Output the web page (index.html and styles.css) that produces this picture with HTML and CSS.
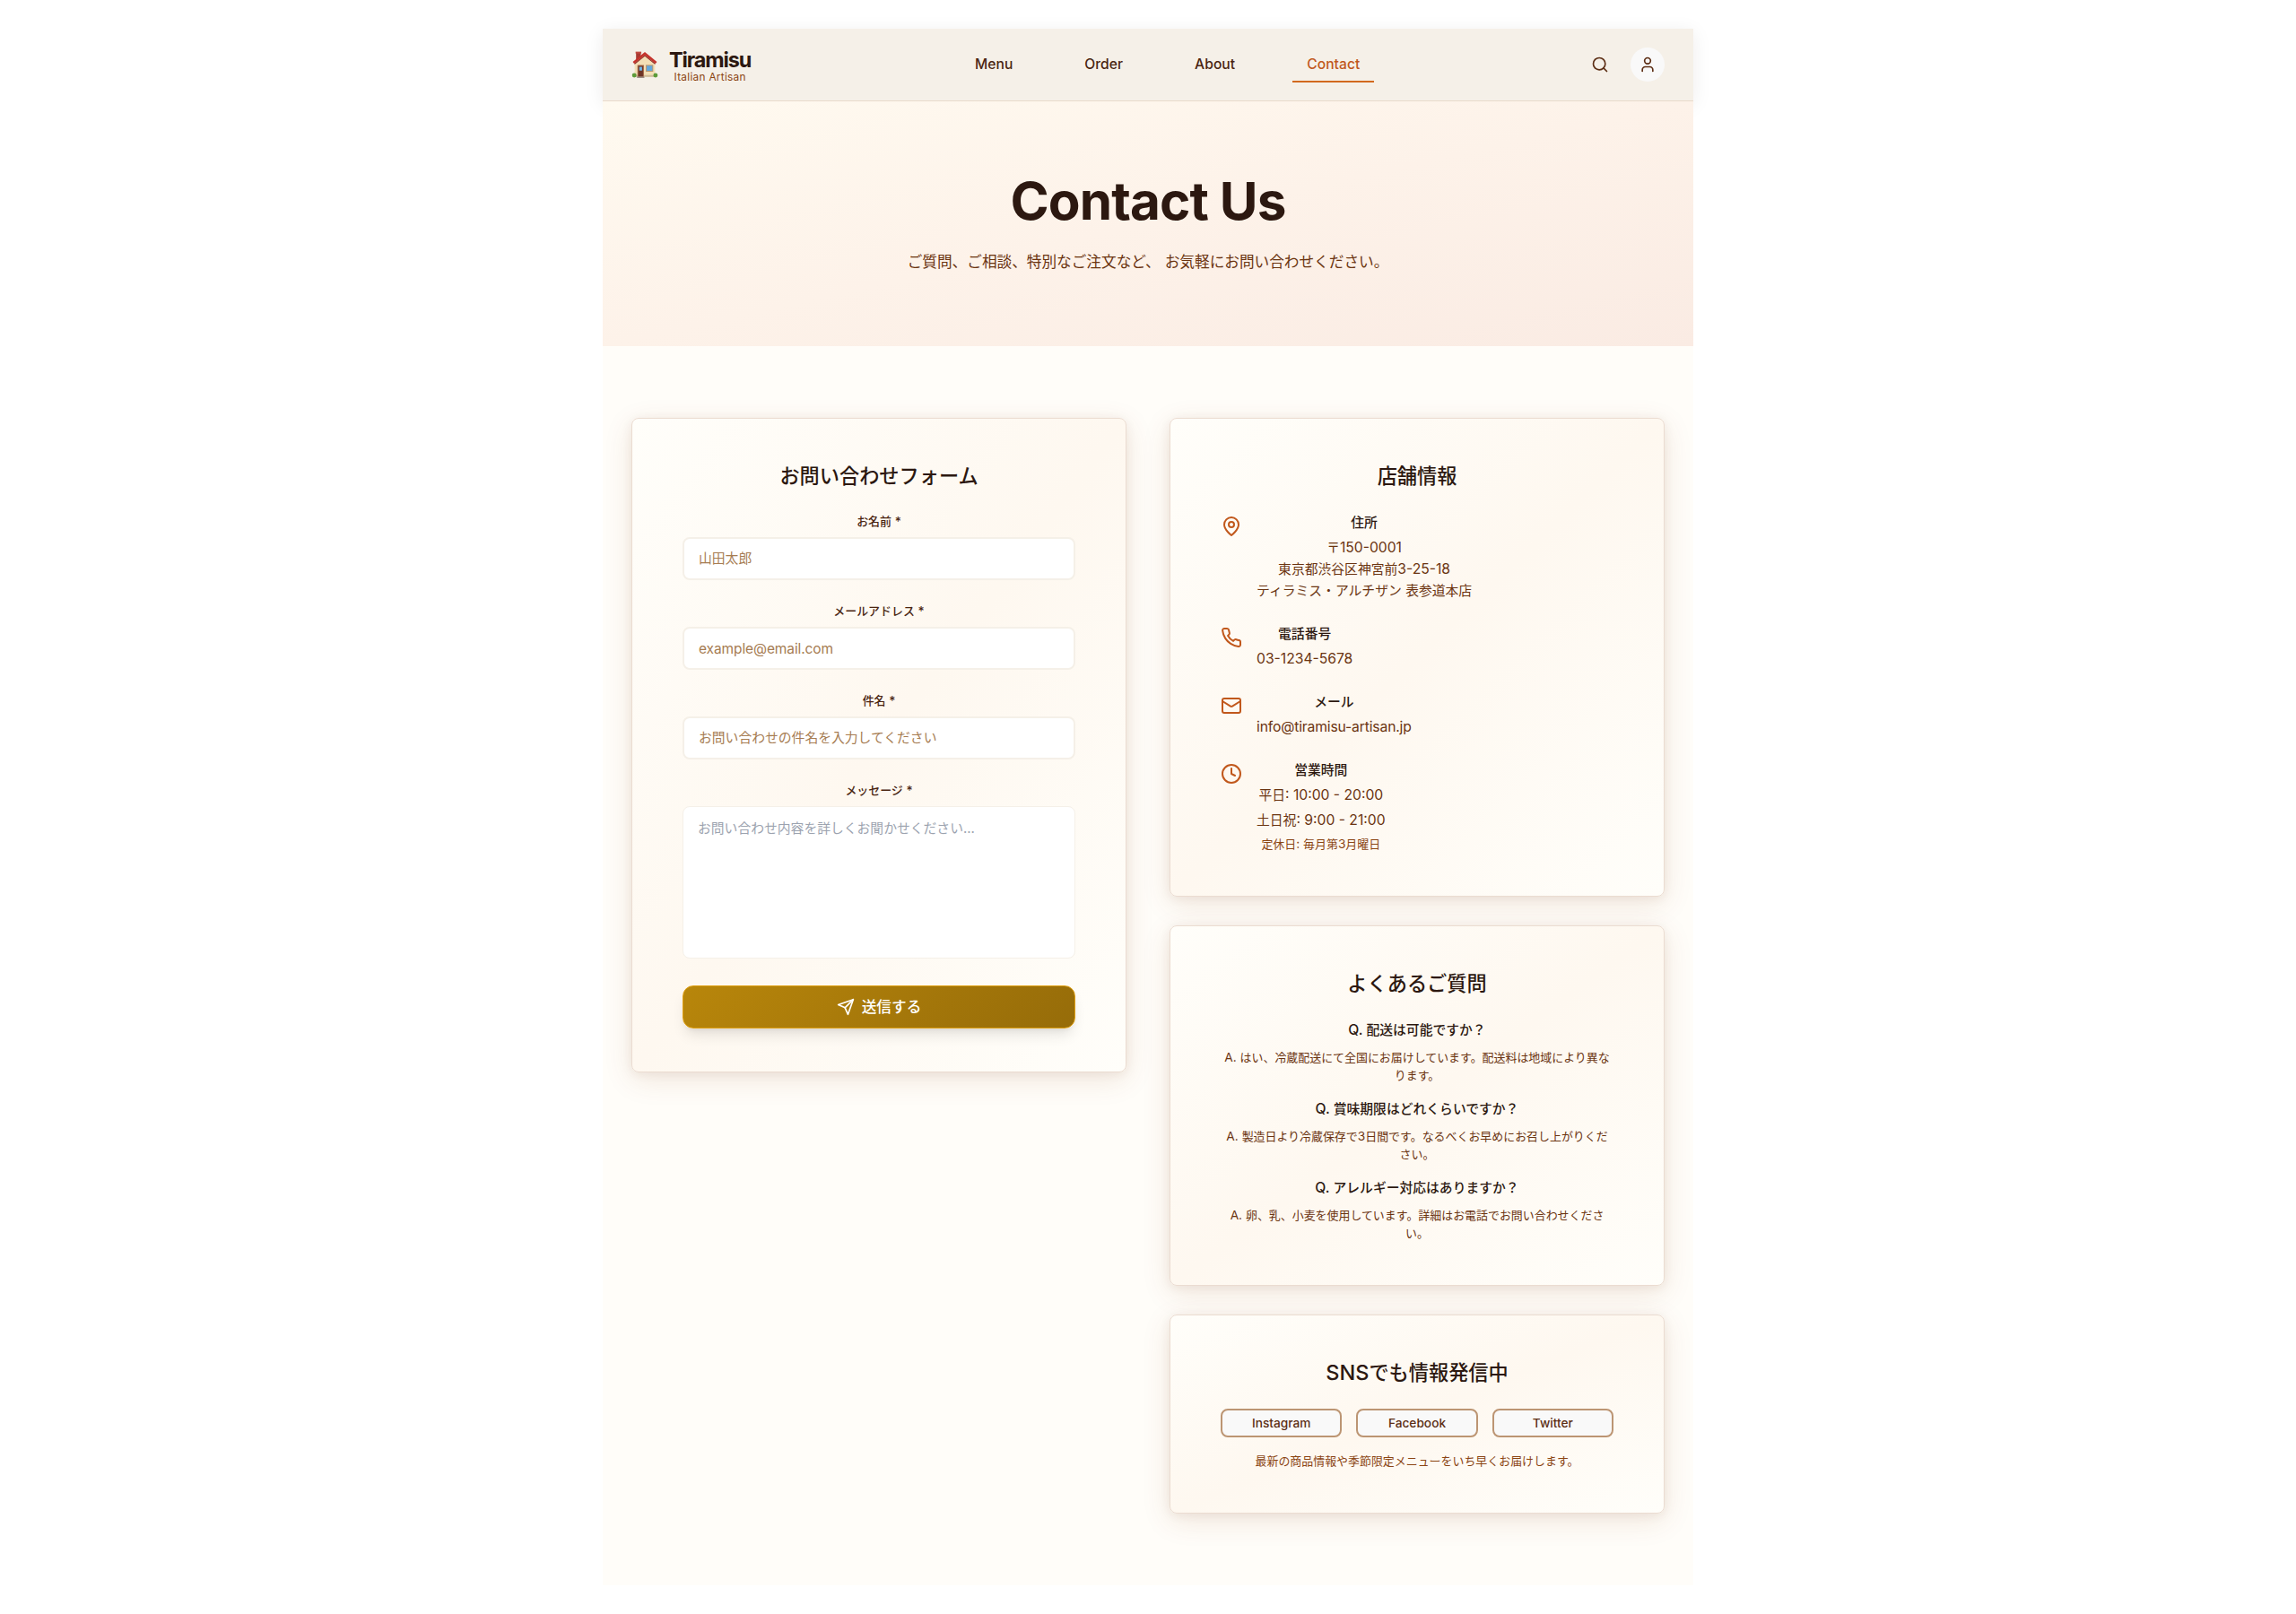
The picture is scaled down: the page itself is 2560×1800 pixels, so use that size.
FILE: index.html
```html
<!DOCTYPE html>
<html lang="ja">
<head>
<meta charset="utf-8">
<title>Contact Us | Tiramisu</title>
<link rel="stylesheet" href="styles.css">
</head>
<body>
<div class="page">
  <header class="header">
    <div class="brand">
      <svg class="brand-icon" viewBox="0 0 28 29" aria-hidden="true">
        <path d="M4.500 1h5.200v8H4.500z" fill="#a93a32"/>
        <path d="M4 .6h6.200v2H4z" fill="#c14a40"/>
        <path d="M3 12.500 14 3l11 9.500V27.500H3z" fill="#f3dfb6"/>
        <path d="M3 25.800h22v2H3z" fill="#cdbb9b"/>
        <path d="M14 1 27 11.600l-1.500 1.900L14 4.300 2.500 13.500 1 11.600z" fill="#c5332c"/>
        <path d="M14 4.300 25.500 13.500l-.7.7L14 5.600 3.200 14.200l-.7-.7z" fill="#8d2420"/>
        <path d="M6 15h7v13H6z" fill="#a56a48"/>
        <path d="M7 16h5v11.500H7z" fill="#6d3527"/>
        <path d="M8 17h3v4H8z" fill="#6fb7e8"/>
        <path d="M15 14.800h8v7.400h-8z" fill="#b99873"/>
        <path d="M16 15.800h6v5.400h-6z" fill="#62a9de"/>
        <circle cx="2.600" cy="26" r="2.400" fill="#5d9b3a"/>
        <circle cx="25.500" cy="26" r="2.400" fill="#5d9b3a"/>
        <path d="M5.500 27.500h8v1.500h-8z" fill="#9b9087"/>
      </svg>
      <div class="brand-text">
        <span class="brand-name">Tiramisu</span>
        <span class="brand-sub">Italian Artisan</span>
      </div>
    </div>
    <nav class="nav">
      <a class="nav-link">Menu</a>
      <a class="nav-link">Order</a>
      <a class="nav-link">About</a>
      <a class="nav-link nav-link-active">Contact</a>
    </nav>
    <div class="actions">
      <button class="icon-button" aria-label="Search"><svg class="icon icon-sm" viewBox="0 0 24 24"><circle cx="11" cy="11" r="8"/><path d="m21 21-4.300-4.300"/></svg></button>
      <button class="icon-button icon-button-filled" aria-label="Account"><svg class="icon icon-sm" viewBox="0 0 24 24"><path d="M19 21v-2a4 4 0 0 0-4-4H9a4 4 0 0 0-4 4v2"/><circle cx="12" cy="7" r="4"/></svg></button>
    </div>
  </header>

  <section class="hero">
    <h1 class="hero-title">Contact Us</h1>
    <p class="hero-text">ご質問、ご相談、特別なご注文など、<span class="lt"> </span>お気軽にお問い合わせください。</p>
  </section>

  <main class="content">
    <section class="card">
      <h2 class="card-title">お問い合わせフォーム</h2>
      <form class="form">
        <div class="field"><label class="label">お名前<span class="lt"> *</span></label><input class="input" placeholder="山田太郎"></div>
        <div class="field"><label class="label">メールアドレス<span class="lt"> *</span></label><input class="input input-latin" placeholder="example@email.com"></div>
        <div class="field"><label class="label">件名<span class="lt"> *</span></label><input class="input" placeholder="お問い合わせの件名を入力してください"></div>
        <div class="field"><label class="label">メッセージ<span class="lt"> *</span></label><textarea class="textarea" placeholder="お問い合わせ内容を詳しくお聞かせください..."></textarea></div>
        <button type="button" class="submit"><svg class="icon icon-sm" viewBox="0 0 24 24"><path d="m22 2-7 20-4-9-9-4Z"/><path d="M22 2 11 13"/></svg><span>送信する</span></button>
      </form>
    </section>

    <div class="column">
      <section class="card">
        <h2 class="card-title">店舗情報</h2>
        <div class="info-list">
          <div class="info">
            <svg class="icon info-icon" viewBox="0 0 24 24"><path d="M20 10c0 6-8 12-8 12s-8-6-8-12a8 8 0 0 1 16 0Z"/><circle cx="12" cy="10" r="3"/></svg>
            <div class="info-body">
              <h3 class="info-title">住所</h3>
              <p class="info-text">〒<span class="lt">150-0001</span><br>東京都渋谷区神宮前<span class="lt">3-25-18</span><br>ティラミス・アルチザン<span class="lt"> </span>表参道本店</p>
            </div>
          </div>
          <div class="info">
            <svg class="icon info-icon" viewBox="0 0 24 24"><path d="M22 16.920v3a2 2 0 0 1-2.180 2 19.790 19.790 0 0 1-8.630-3.070 19.500 19.500 0 0 1-6-6 19.790 19.790 0 0 1-3.070-8.670A2 2 0 0 1 4.110 2h3a2 2 0 0 1 2 1.720 12.840 12.840 0 0 0 .7 2.810 2 2 0 0 1-.45 2.110L8.090 9.910a16 16 0 0 0 6 6l1.270-1.270a2 2 0 0 1 2.110-.45 12.840 12.840 0 0 0 2.810.7A2 2 0 0 1 22 16.920z"/></svg>
            <div class="info-body">
              <h3 class="info-title">電話番号</h3>
              <p class="info-text"><span class="lt">03-1234-5678</span></p>
            </div>
          </div>
          <div class="info">
            <svg class="icon info-icon" viewBox="0 0 24 24"><rect width="20" height="16" x="2" y="4" rx="2"/><path d="m22 7-8.970 5.700a1.940 1.940 0 0 1-2.060 0L2 7"/></svg>
            <div class="info-body">
              <h3 class="info-title">メール</h3>
              <p class="info-text"><span class="lt lt-tight">info@tiramisu-artisan.jp</span></p>
            </div>
          </div>
          <div class="info">
            <svg class="icon info-icon" viewBox="0 0 24 24"><circle cx="12" cy="12" r="10"/><path d="M12 6v6l4 2"/></svg>
            <div class="info-body">
              <h3 class="info-title">営業時間</h3>
              <p class="info-text">平日<span class="lt">: 10:00 - 20:00</span></p>
              <p class="info-text">土日祝<span class="lt">: 9:00 - 21:00</span></p>
              <p class="info-note">定休日<span class="lt">: </span>毎月第<span class="lt">3</span>月曜日</p>
            </div>
          </div>
        </div>
      </section>

      <section class="card">
        <h2 class="card-title">よくあるご質問</h2>
        <div class="faq-list">
          <div class="faq">
            <h3 class="faq-question"><span class="lt">Q. </span>配送は可能ですか？</h3>
            <p class="faq-answer"><span class="lt">A. </span>はい、冷蔵配送にて全国にお届けしています。配送料は地域により異なります。</p>
          </div>
          <div class="faq">
            <h3 class="faq-question"><span class="lt">Q. </span>賞味期限はどれくらいですか？</h3>
            <p class="faq-answer"><span class="lt">A. </span>製造日より冷蔵保存で<span class="lt">3</span>日間です。なるべくお早めにお召し上がりください。</p>
          </div>
          <div class="faq">
            <h3 class="faq-question"><span class="lt">Q. </span>アレルギー対応はありますか？</h3>
            <p class="faq-answer"><span class="lt">A. </span>卵、乳、小麦を使用しています。詳細はお電話でお問い合わせください。</p>
          </div>
        </div>
      </section>

      <section class="card">
        <h2 class="card-title"><span class="lt">SNS</span>でも情報発信中</h2>
        <div class="social">
          <button class="social-button">Instagram</button>
          <button class="social-button">Facebook</button>
          <button class="social-button">Twitter</button>
        </div>
        <p class="social-note">最新の商品情報や季節限定メニューをいち早くお届けします。</p>
      </section>
    </div>
  </main>
</div>
</body>
</html>
```
FILE: styles.css
```css
* {
  box-sizing: border-box;
}

body {
  margin: 0;
  background: #fff;
  color: #2c1810;
  font-family: Inter, "Noto Sans CJK JP", sans-serif;
  font-size: 16px;
  line-height: 24px;
}

h1, h2, h3, p {
  margin: 0;
}

button, input, textarea {
  font: inherit;
}

/* Latin runs sit slightly larger than the Japanese text around them */
.lt {
  font-size: 1.06em;
  line-height: 1;
  white-space: pre-wrap;
}

.lt-tight {
  letter-spacing: -0.15px;
}

.page {
  width: 1216px;
  min-height: 1736px;
  margin: 32px auto;
  background: #fffdf9;
  text-align: center;
}

.header {
  display: flex;
  align-items: center;
  justify-content: space-between;
  height: 81px;
  padding: 0 32px;
  border-bottom: 1px solid #e8dacb;
  background: #f5f0e8;
  box-shadow: 0 4px 20px rgba(44, 24, 16, 0.08);
}

.brand {
  display: flex;
  align-items: center;
  gap: 12px;
}

.brand-icon {
  width: 30px;
  height: 30px;
}

.brand-text {
  display: flex;
  flex-direction: column;
  padding-top: 3px;
}

.brand-name {
  font-size: 23.4px;
  font-weight: 700;
  line-height: 24px;
  letter-spacing: -1.1px;
}

.brand-sub {
  color: #8b4513;
  font-size: 11.8px;
  line-height: 14px;
  letter-spacing: 0.3px;
}

.nav {
  display: flex;
  gap: 48px;
}

.nav-link {
  padding: 8px 16px 6px;
  border-bottom: 2px solid transparent;
  color: #4a2511;
  font-size: 15.6px;
  font-weight: 500;
  letter-spacing: 0.05px;
}

.nav-link-active {
  border-bottom-color: #d2691e;
  color: #c1581c;
}

.actions {
  display: flex;
  align-items: center;
  gap: 16px;
}

.icon-button {
  display: flex;
  padding: 8px;
  border: 0;
  border-radius: 50%;
  background: none;
  color: #5c2e14;
}

.icon-button-filled {
  padding: 9px;
  background: #f9f9f9;
}

.icon {
  flex: none;
  width: 24px;
  height: 24px;
  fill: none;
  stroke: currentColor;
  stroke-width: 2;
  stroke-linecap: round;
  stroke-linejoin: round;
}

.icon-sm {
  width: 20px;
  height: 20px;
}

.hero {
  padding: 80px 32px;
  background: linear-gradient(to bottom right, #fffaf0 0%, #fdf2e9 50%, #faebe3 100%);
}

.hero-title {
  margin-bottom: 24px;
  font-size: 58.4px;
  font-weight: 700;
  line-height: 61px;
  letter-spacing: -0.9px;
}

.hero-text {
  color: #6b3410;
  font-size: 16.65px;
  line-height: 28px;
}

.content {
  display: grid;
  grid-template-columns: 1fr 1fr;
  gap: 48px;
  align-items: start;
  padding: 80px 32px;
}

.column {
  display: grid;
  gap: 32px;
}

.card {
  padding: 48px 56px;
  border: 1px solid #ebdcd1;
  border-radius: 8px;
  background: linear-gradient(to bottom right, #fffefa 0%, #fef8f0 50%, #fffefa 100%);
  box-shadow: 0 8px 32px rgba(139, 69, 19, 0.12), 0 2px 12px rgba(92, 46, 20, 0.07);
}

.card-title {
  margin-bottom: 24px;
  font-size: 22.2px;
  font-weight: 500;
  line-height: 32px;
}

.form {
  display: grid;
  gap: 24px;
}

.field {
  display: grid;
  gap: 8px;
}

.label {
  color: #4a2511;
  font-size: 12.95px;
  font-weight: 500;
  line-height: 20px;
}

.input,
.textarea {
  display: block;
  width: 100%;
  border: 2px solid #f5f0e8;
  border-radius: 8px;
  outline: 0;
  background: #fff;
  font-size: 14.8px;
}

.input {
  height: 48px;
  padding: 0 16px;
}

.input-latin {
  font-size: 15.5px;
  letter-spacing: -0.1px;
}

.input::placeholder {
  color: #a67c52;
}

.textarea {
  height: 170px;
  margin-bottom: 6px;
  padding: 12px 16px;
  border-width: 1px;
  line-height: 24px;
  resize: none;
}

.textarea::placeholder {
  color: #9ca3af;
}

.submit {
  display: flex;
  align-items: center;
  justify-content: center;
  gap: 8px;
  height: 48px;
  border: 1px solid #e0a010;
  border-radius: 12px;
  background: linear-gradient(135deg, #b8860b, #966c09);
  box-shadow: 0 10px 15px -3px rgba(0, 0, 0, 0.1), 0 4px 6px -4px rgba(0, 0, 0, 0.1);
  color: #fff;
  font-size: 16.65px;
  font-weight: 500;
}

.info-list {
  display: grid;
  gap: 24px;
}

.info {
  display: flex;
  gap: 16px;
}

.info-icon {
  margin-top: 4px;
  color: #c1581c;
}

.info-body {
  display: grid;
  gap: 4px;
}

.info-title,
.faq-question {
  font-size: 14.8px;
  font-weight: 500;
  line-height: 24px;
}

.info-text {
  color: #6b3410;
  font-size: 14.8px;
}

.info-note {
  color: #8b4513;
  font-size: 12.95px;
  line-height: 20px;
}

.faq-list {
  display: grid;
  gap: 16px;
}

.faq {
  display: grid;
  gap: 8px;
}

.faq-answer {
  color: #6b3410;
  font-size: 12.95px;
  line-height: 20px;
}

.social {
  display: grid;
  grid-template-columns: repeat(3, 1fr);
  gap: 16px;
}

.social-button {
  height: 32px;
  padding: 0;
  border: 2px solid #bc9573;
  border-radius: 8px;
  background: #f9f9f9;
  color: #5c2e14;
  font-size: 13.7px;
  font-weight: 500;
  line-height: 20px;
}

.social-note {
  margin-top: 16px;
  color: #8b4513;
  font-size: 12.95px;
  line-height: 20px;
}
```
